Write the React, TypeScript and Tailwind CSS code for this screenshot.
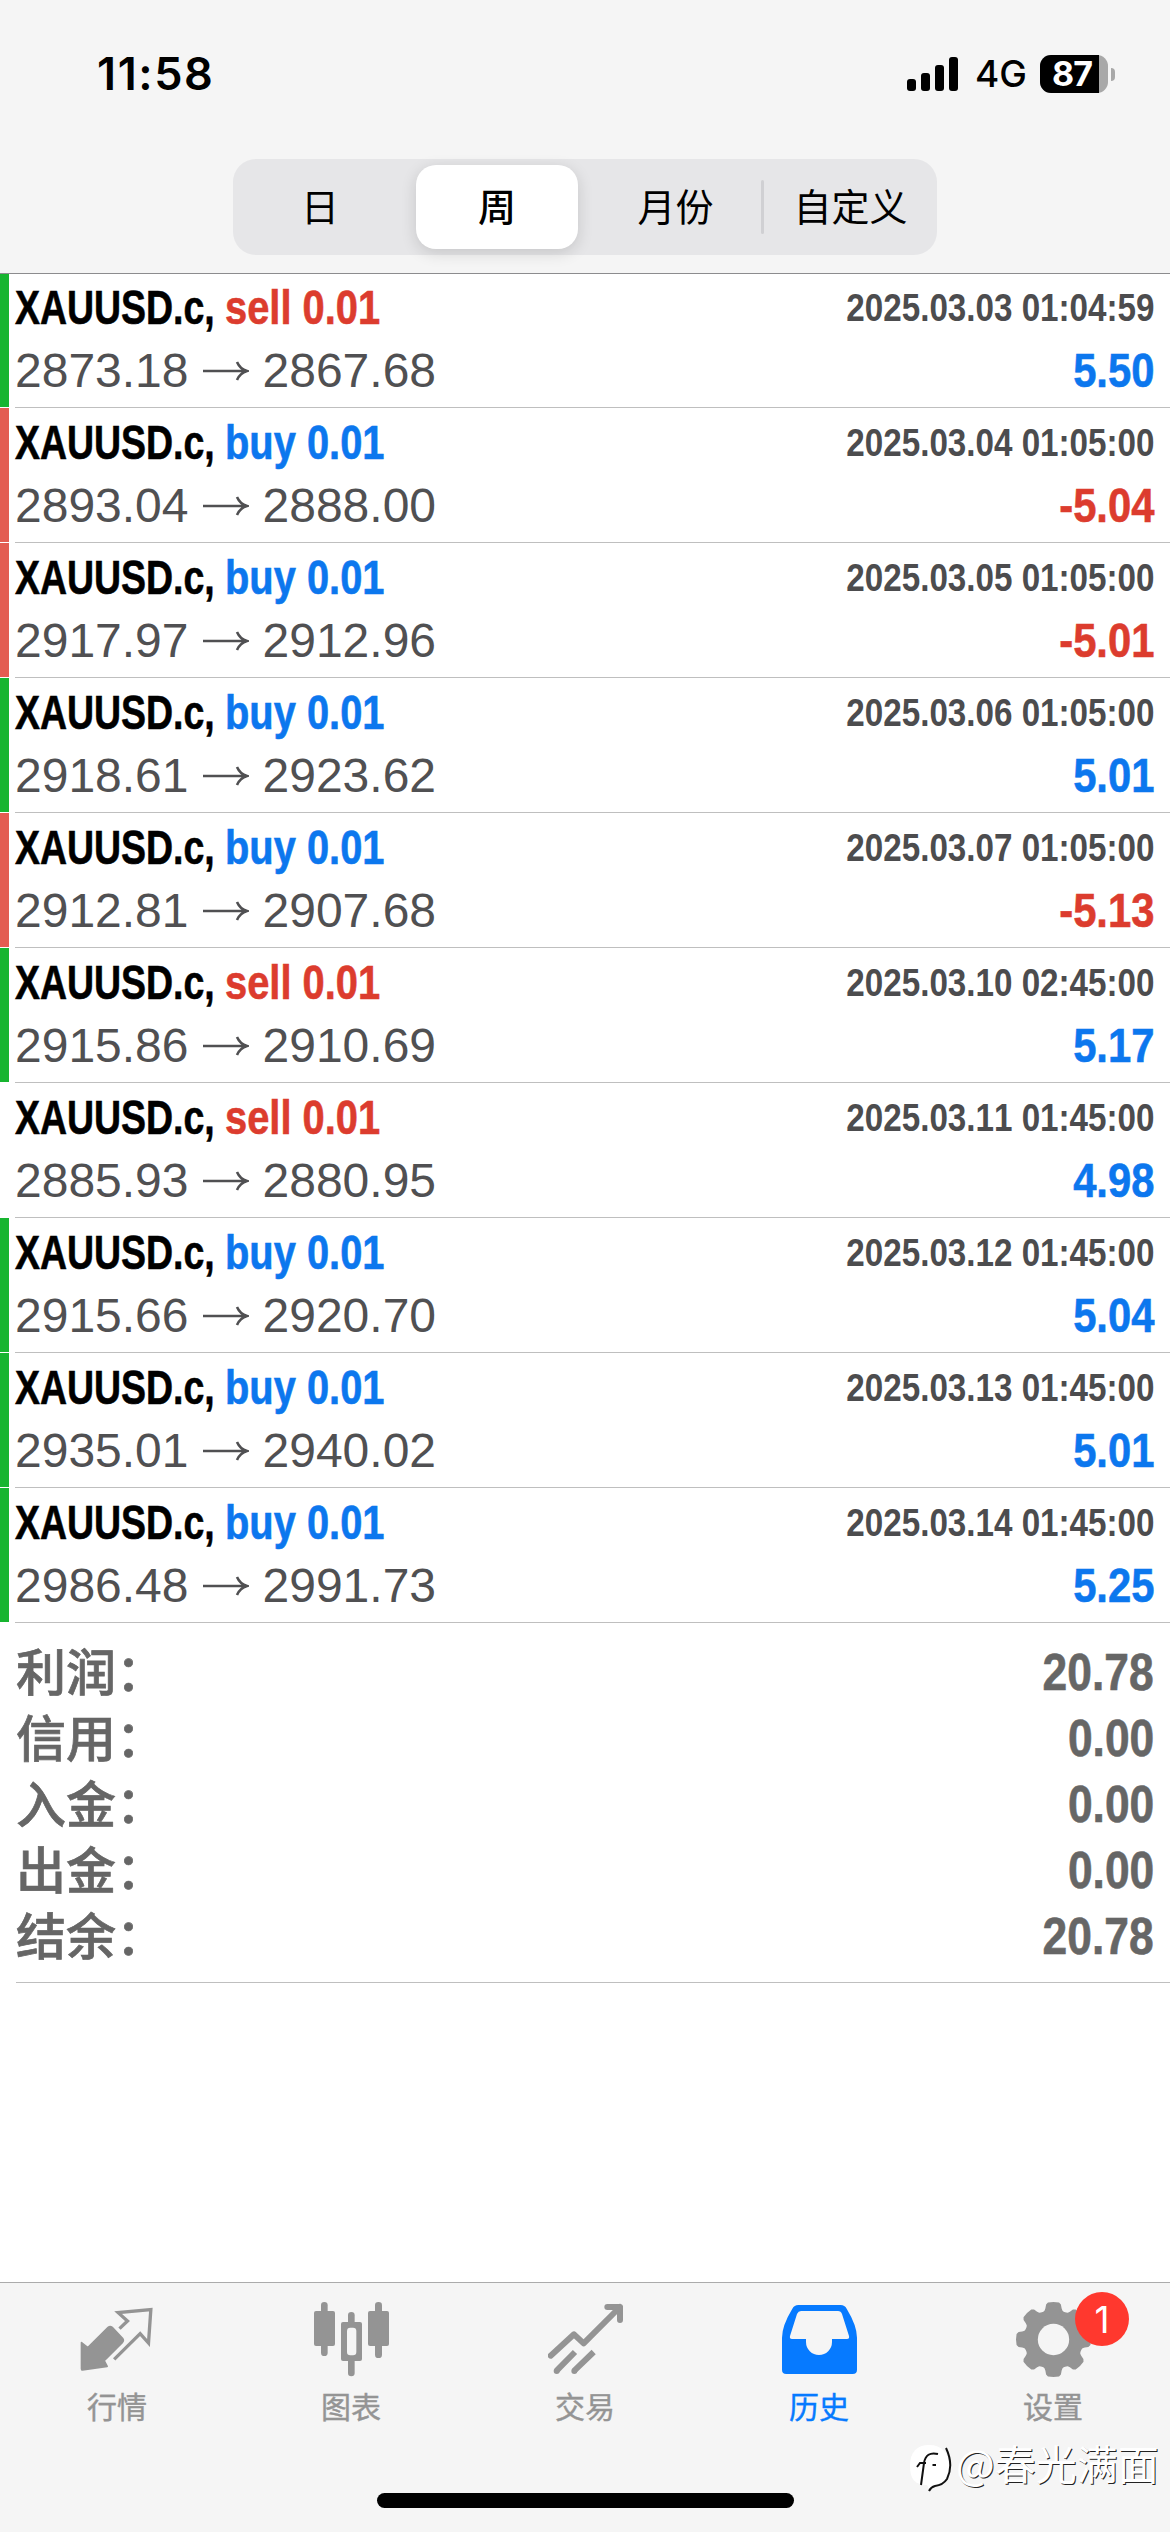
import type { ReactNode } from "react";

type Side = "buy" | "sell";
type Deal = {
  side: Side;
  open: string;
  close: string;
  time: string;
  profit: string;
  stripe: "green" | "red" | "none";
};

const deals: Deal[] = [
  { side: "sell", open: "2873.18", close: "2867.68", time: "2025.03.03 01:04:59", profit: "5.50", stripe: "green" },
  { side: "buy", open: "2893.04", close: "2888.00", time: "2025.03.04 01:05:00", profit: "-5.04", stripe: "red" },
  { side: "buy", open: "2917.97", close: "2912.96", time: "2025.03.05 01:05:00", profit: "-5.01", stripe: "red" },
  { side: "buy", open: "2918.61", close: "2923.62", time: "2025.03.06 01:05:00", profit: "5.01", stripe: "green" },
  { side: "buy", open: "2912.81", close: "2907.68", time: "2025.03.07 01:05:00", profit: "-5.13", stripe: "red" },
  { side: "sell", open: "2915.86", close: "2910.69", time: "2025.03.10 02:45:00", profit: "5.17", stripe: "green" },
  { side: "sell", open: "2885.93", close: "2880.95", time: "2025.03.11 01:45:00", profit: "4.98", stripe: "none" },
  { side: "buy", open: "2915.66", close: "2920.70", time: "2025.03.12 01:45:00", profit: "5.04", stripe: "green" },
  { side: "buy", open: "2935.01", close: "2940.02", time: "2025.03.13 01:45:00", profit: "5.01", stripe: "green" },
  { side: "buy", open: "2986.48", close: "2991.73", time: "2025.03.14 01:45:00", profit: "5.25", stripe: "green" },
];

const summary = [
  ["利润：", "20.78"],
  ["信用：", "0.00"],
  ["入金：", "0.00"],
  ["出金：", "0.00"],
  ["结余：", "20.78"],
];

const stripeColor = { green: "bg-[#17b530]", red: "bg-[#e35d52]", none: "bg-transparent" };

function StatusBar() {
  return (
    <div className="flex h-[159px] items-start justify-between pl-[97px] pr-[55px] font-['Inter',sans-serif] text-black">
      <div className="mt-[44px] text-[45px] font-semibold leading-[60px] tracking-[1.6px]">11:58</div>
      <div className="mt-[55px] flex h-[38px] items-center">
        <svg width="52" height="34" viewBox="0 0 52 34" className="mr-[16px]">
          <rect x="0" y="22" width="9" height="12" rx="3" />
          <rect x="14" y="16" width="9" height="18" rx="3" />
          <rect x="28" y="8" width="9" height="26" rx="3" />
          <rect x="42" y="0" width="9" height="34" rx="3" />
        </svg>
        <span className="w-[65px] text-[37px] font-medium leading-[38px]">4G</span>
        <div className="flex h-[38px] w-[68px] rounded-[11px] bg-[#a8a8a8]">
          <div className="flex w-[59px] items-center justify-center rounded-l-[11px] bg-black pl-[5px] text-[34px] font-bold leading-none tracking-[-1px] text-white">
            87
          </div>
        </div>
        <div className="ml-[3px] h-[13px] w-[4px] rounded-r-full bg-[#a8a8a8]" />
      </div>
    </div>
  );
}

function Segments() {
  return (
    <div className="mx-auto flex h-[96px] w-[704px] items-center rounded-[23px] bg-[#e6e6e8] font-['Noto_Sans_CJK_SC',sans-serif] text-[38px] leading-none text-black">
      <div className="w-[183px] pb-[4px] pr-[9px] text-center">日</div>
      <div className="flex h-[84px] w-[162px] items-center justify-center rounded-[20px] bg-white pb-[4px] font-medium shadow-[0_4px_16px_rgba(0,0,0,0.14)]">
        周
      </div>
      <div className="w-[183px] pb-[4px] pl-[12px] text-center">月份</div>
      <div className="h-[54px] w-[3px] rounded-full bg-[#d0d0d3]" />
      <div className="w-[173px] pb-[4px] text-center">自定义</div>
    </div>
  );
}

function DealRow({ deal }: { deal: Deal }) {
  const negative = deal.profit.startsWith("-");
  return (
    <div className="flex h-[135px]">
      <div className={`h-[134px] w-[9px] ${stripeColor[deal.stripe]}`} />
      <div className="ml-[6px] flex-1 border-b border-[#bfbfbf] pr-[16px] pt-[3px] font-['Liberation_Sans',sans-serif]">
        <div className="flex h-[63px] items-center justify-between whitespace-nowrap">
          <div className="flex text-[48px] font-bold leading-[56px] [-webkit-text-stroke:0.6px_currentColor]">
            <div className="w-[210px]">
              <span className="inline-block origin-left scale-x-[0.78] text-black">XAUUSD.c,</span>
            </div>
            <span
              className={
                deal.side === "buy"
                  ? "inline-block origin-left scale-x-[0.83] text-[#0c77ee]"
                  : "inline-block origin-left scale-x-[0.83] text-[#dc3c2e]"
              }
            >
              {deal.side} 0.01
            </span>
          </div>
          <span className="inline-block origin-right scale-x-[0.862] text-[38.5px] font-bold leading-[56px] text-[#4c4c4e] [font-kerning:none]">
            {deal.time}
          </span>
        </div>
        <div className="flex h-[63px] items-center justify-between whitespace-nowrap text-[48px] leading-[56px]">
          <div className="flex items-center text-[#505052] [font-kerning:none]">
            <span>{deal.open}</span>
            <svg width="46" height="20" viewBox="0 0 46 20" className="ml-[14px] mr-[14px]" fill="none" stroke="#505052" strokeWidth="2.6">
              <path d="M0 10H44M34 1q3 7 10 9q-7 2-10 9" />
            </svg>
            <span>{deal.close}</span>
          </div>
          <span
            className={
              negative
                ? "inline-block origin-right scale-x-[0.87] font-bold text-[#dc3c2e] [-webkit-text-stroke:0.6px_currentColor]"
                : "inline-block origin-right scale-x-[0.87] font-bold text-[#0c77ee] [-webkit-text-stroke:0.6px_currentColor]"
            }
          >
            {deal.profit}
          </span>
        </div>
      </div>
    </div>
  );
}

function Tab({ label, active, children }: { label: string; active?: boolean; children: ReactNode }) {
  return (
    <div className={active ? "relative flex flex-1 flex-col items-center text-[#067aff]" : "relative flex flex-1 flex-col items-center text-[#949494]"}>
      {children}
      <span className="mt-[8px] font-['Noto_Sans_CJK_SC',sans-serif] text-[30px] leading-[40px] [-webkit-text-stroke:0.4px_currentColor]">{label}</span>
    </div>
  );
}

function gearPath(cx: number, cy: number) {
  const points: string[] = [];
  const profile: [number, number][] = [
    [-20, 89],
    [-17, 91],
    [-14.5, 97],
    [-12, 107],
    [-8.5, 112],
    [0, 112.5],
    [8.5, 112],
    [12, 107],
    [14.5, 97],
    [17, 91],
    [20, 89],
  ];
  for (let i = 0; i < 8; i++) {
    for (const [angle, radius] of profile) {
      const a = ((i * 45 + angle) * Math.PI) / 180;
      points.push(`${(cx + radius * Math.sin(a)).toFixed(1)} ${(cy - radius * Math.cos(a)).toFixed(1)}`);
    }
  }
  return `M${points.join("L")}Z`;
}

function TabBar() {
  return (
    <div className="relative flex h-[250px] flex-col border-t border-[#ababab] bg-[#f5f5f5]">
      <div className="flex pt-[19px]">
        <Tab label="行情">
          <svg width="75" height="75" viewBox="238.5 96 225 225">
            <path
              d="M243 218L262 233L323 172Q329 167 335 172L366 205Q371 211 366 217L311 272L320 289L246 300Q243 300 243 296Z"
              fill="currentColor"
              stroke="currentColor"
              strokeWidth="5"
              strokeLinejoin="round"
            />
            <path d="M357 176L381 153L353 128L451 119L444 219L419 191L341 268" fill="none" stroke="currentColor" strokeWidth="10" />
          </svg>
        </Tab>
        <Tab label="图表">
          <svg width="75" height="75" viewBox="939 96 225 225" fill="currentColor">
            <rect x="939" y="123" width="63" height="105" rx="6" />
            <rect x="960" y="96" width="20" height="162" rx="10" />
            <rect x="1101" y="123" width="63" height="105" rx="6" />
            <rect x="1122" y="96" width="21" height="168" rx="10" />
            <rect x="1041" y="126" width="20" height="50" rx="10" />
            <rect x="1041" y="250" width="20" height="69" rx="10" />
            <rect x="1020" y="156" width="63" height="117" rx="6" />
            <rect x="1038" y="173" width="28" height="83" rx="10" fill="#f5f5f5" />
          </svg>
        </Tab>
        <Tab label="交易">
          <svg width="75" height="75" viewBox="141 96 225 225" fill="none" stroke="currentColor" strokeWidth="18" strokeLinejoin="round">
            <path d="M149 257L219 193L248 220L357 111M319 111H357V150" strokeLinecap="round" />
            <path d="M350 104L362 106L362 130L330 113Z" fill="currentColor" stroke="none" />
            <path d="M222 246L167 302M278 246L220 302" />
            <circle cx="167" cy="303" r="9" fill="currentColor" stroke="none" />
            <circle cx="220" cy="303" r="9" fill="currentColor" stroke="none" />
          </svg>
        </Tab>
        <Tab label="历史" active>
          <svg width="75" height="75" viewBox="843 96 225 225" fill="currentColor">
            <path
              fillRule="evenodd"
              d="M892 105H1019Q1031 105 1037 116Q1068 167 1068 203V299Q1068 312 1055 312H856Q843 312 843 299V203Q843 167 874 116Q880 105 892 105ZM900 123Q892 123 888 132L867 198Q865 207 873 207H915V216A39 39 0 0 0 993 216V207H1038Q1046 207 1044 198L1023 132Q1020 123 1011 123Z"
            />
          </svg>
        </Tab>
        <Tab label="设置">
          <svg width="75" height="75" viewBox="465 96 225 225" fill="currentColor">
            <path d={gearPath(577.5, 208.5)} />
            <circle cx="577.5" cy="208.5" r="47" fill="#f5f5f5" stroke="none" />
          </svg>
          <div className="absolute left-[139px] top-[-10px] flex h-[54px] w-[54px] items-center justify-center rounded-full bg-[#ff382e] font-['Inter',sans-serif] text-[37px] leading-none text-white">
            1
          </div>
        </Tab>
      </div>
      <div className="absolute left-[377px] top-[210px] h-[15px] w-[417px] rounded-full bg-black" />
      <Watermark />
    </div>
  );
}

function Watermark() {
  return (
    <div className="absolute left-[909px] top-[160px] flex items-start whitespace-nowrap font-['Noto_Sans_CJK_SC',sans-serif] text-[41px] leading-[50px] text-white [text-shadow:1px_1px_0_#222]">
      <svg width="44" height="50" viewBox="0 0 44 50" fill="none">
        <path d="M20 2C33 2 40 10 40 23C40 36 33 43 23 44L20 46L18 42C6 42 1 36 1 23C1 9 8 2 20 2Z" fill="#fff" />
        <path d="M37 5Q45 22 38 36Q34 42 26 43Q22 44 20 48M29 11Q17 8 15 20L12 42M8 24L11 20H17M23.500 22H27" stroke="#111" strokeWidth="2" />
      </svg>
      <span className="-mt-[6px] ml-[3px]">@春光满面</span>
    </div>
  );
}

export default function App() {
  return (
    <div className="flex h-[2532px] w-[1170px] flex-col overflow-hidden bg-white">
      <header className="relative z-10 h-[274px] border-b border-[#8c8c8e] bg-[#f5f5f5]">
        <StatusBar />
        <Segments />
      </header>
      <main className="-mt-px flex-1">
        {deals.map((deal) => (
          <DealRow key={deal.time} deal={deal} />
        ))}
        <div className="ml-[16px] h-[360px] border-b border-[#bfbfbf] pr-[16px] pt-[17px] text-[#666]">
          {summary.map(([label, value]) => (
            <div key={label} className="flex h-[66px] items-center justify-between">
              <span className="pb-[8px] font-['Noto_Sans_CJK_SC',sans-serif] text-[50px] font-medium leading-[58px] [-webkit-text-stroke:0.7px_currentColor]">
                {label}
              </span>
              <span className="inline-block origin-right scale-x-[0.87] font-['Liberation_Sans',sans-serif] text-[51px] font-bold leading-[66px] [-webkit-text-stroke:0.6px_currentColor]">
                {value}
              </span>
            </div>
          ))}
        </div>
      </main>
      <TabBar />
    </div>
  );
}
